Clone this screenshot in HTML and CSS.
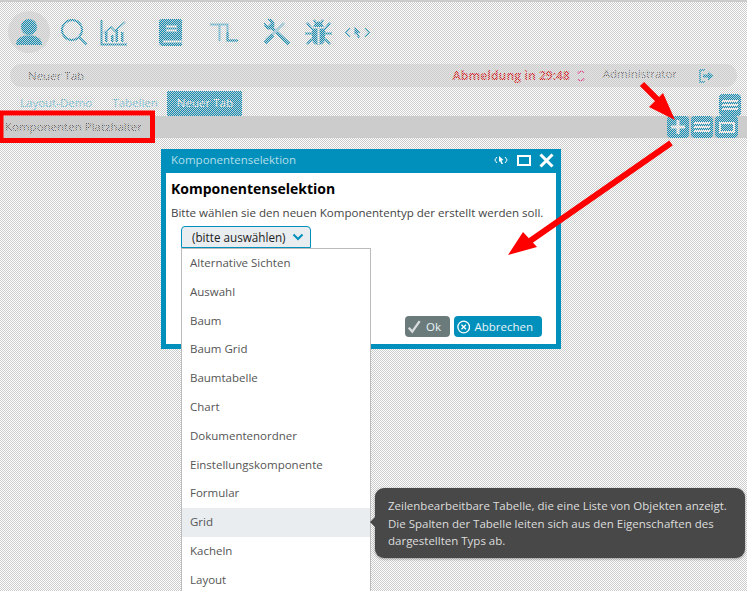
FILE: index.html
```html
<!DOCTYPE html>
<html lang="de">
<head>
<meta charset="utf-8">
<title>Komponentenselektion</title>
<link rel="stylesheet" href="styles.css">
</head>
<body>
<div class="app">
  <header class="nav">
    <div class="nav-user">
      <svg width="28" height="28" viewBox="0 0 28 28"><circle cx="14" cy="9" r="8"/><path d="M1 27c0-6 4-8 9-9.500h8c5 1.500 9 3.500 9 9.500z"/></svg>
    </div>
    <svg class="ic ic-search" width="28" height="28" viewBox="0 0 28 28"><circle cx="12" cy="12" r="10" class="ln"/><path d="M19 19l7.500 7.500" class="ln"/></svg>
    <svg class="ic ic-chart" width="28" height="28" viewBox="0 0 28 28"><path d="M1.500 2v24.500H27" class="ln"/><path d="M5 14h2.500v10H5zM11 17h2.500v7H11zM15.500 12H18v12h-2.500zM21 14h2.500v10H21z"/><path d="M4 15l7-6 4 4 10-9" class="ln thin"/></svg>
    <svg class="ic ic-book" width="24" height="27" viewBox="0 0 24 27"><path d="M3 0h18a2 2 0 0 1 2 2v25H4a4 4 0 0 1-4-4V3a3 3 0 0 1 3-3z"/><path d="M7 7.500h11M7 11.500h11M4 22.500h19" class="cut"/></svg>
    <svg class="ic ic-tl" width="28" height="19" viewBox="0 0 28 19"><path d="M0 1.500h17.500v16H28" class="ln light"/><path d="M9.500 2v16" class="ln light"/><path d="M17.500 9v8.500H28" class="ln"/></svg>
    <svg class="ic ic-tools" width="27" height="27" viewBox="0 0 27 27"><path d="M8 8l18 17" class="ln wide"/><path d="M1 3.500l4 3.500 3-3-3.500-3.500c4-1.500 7 1 7 5 0 2-1 3-2 4l-2 1c-3 1-7-3-6.500-7z"/><path d="M3 21L21 4" class="ln wide2"/><path d="M2 24l8-8" class="ln wide"/></svg>
    <svg class="ic ic-bug" width="27" height="27" viewBox="0 0 27 27"><path d="M8.500 8c0-3 2-5.500 5-5.500s5 2.500 5 5.500z"/><path d="M7 9.500h13v10c0 4-3 6.500-6.500 6.500S7 23.500 7 19.500z"/><path d="M13.500 9.500V27" class="cut"/><path d="M2 4l5 6M25 4l-5 6M0 14.500h7M27 14.500h-7M2 25l5-5M25 25l-5-5M9 1l2 3M18 1l-2 3" class="ln"/></svg>
    <svg class="ic ic-dev" width="25" height="11" viewBox="0 0 25 11"><path d="M5 1.500L1 5.500l4 4M20 1.500l4 4-4 4" class="ln thin"/><path d="M9.500 0l6.500 5.500-3 .5 2 4.500-2 .5-2-4.500-1.500 2z"/></svg>
  </header>

  <div class="session">
    <span class="session-tab">Neuer Tab</span>
    <span class="session-logout">Abmeldung in 29:48</span>
    <svg class="ic-refresh" width="10" height="12" viewBox="0 0 10 12"><path d="M1.500 4A4 4 0 0 1 8 2.500M8.500 8A4 4 0 0 1 2 9.500" fill="none" stroke="#f0308a" stroke-width="1.400"/></svg>
    <span class="session-user">Administrator</span>
    <svg class="ic-exit" width="15" height="14" viewBox="0 0 15 14"><path d="M6 1H1v12h5" class="ln thin"/><path d="M4 5.500h5V2.500L14.500 7 9 11.500v-3H4z"/></svg>
  </div>

  <div class="tabrow">
    <span class="tab">Layout-Demo</span>
    <span class="tab">Tabellen</span>
    <span class="tab tab-active">Neuer Tab</span>
    <span class="tool tool-menu"><svg width="16" height="10" viewBox="0 0 16 10"><path d="M0 1h16M0 5h16M0 9h16"/></svg></span>
  </div>
  <div class="holder">
    <span class="holder-title">Komponenten Platzhalter</span>
    <span class="tool"><svg width="14" height="14" viewBox="0 0 14 14"><path class="plus" d="M7 0v14M0 7h14"/></svg></span>
    <span class="tool"><svg width="16" height="10" viewBox="0 0 16 10"><path d="M0 1h16M0 5h16M0 9h16"/></svg></span>
    <span class="tool tool-last"><svg width="16" height="11" viewBox="0 0 16 11"><path d="M1 1h14v9H1z"/></svg></span>
  </div>
</div>

<svg class="veil" width="747" height="591">
  <defs>
    <pattern id="checker" width="2" height="2" patternUnits="userSpaceOnUse">
      <rect width="1" height="1" fill="#ccc"/>
      <rect x="1" y="1" width="1" height="1" fill="#ccc"/>
    </pattern>
  </defs>
  <rect width="747" height="591" fill="url(#checker)"/>
</svg>

<section class="modal">
  <div class="modal-bar">
    <span class="modal-title">Komponentenselektion</span>
    <svg class="mb-dev" width="14" height="8" viewBox="0 0 14 8"><path d="M3 1L.8 4 3 7M11 1l2.200 3L11 7" fill="none" stroke="#fff"/><path d="M5 0l4.500 4-2 .5L9 8H7.500L6 5 5 6z" fill="#fff"/></svg>
    <svg class="mb-max" width="14" height="11" viewBox="0 0 14 11"><path d="M1 1h12v9H1z" fill="none" stroke="#fff" stroke-width="2"/></svg>
    <svg class="mb-close" width="15" height="15" viewBox="0 0 15 15"><path d="M1.500 1.500l12 12M13.500 1.500l-12 12" stroke="#fff" stroke-width="3"/></svg>
  </div>
  <div class="modal-body">
    <h2>Komponentenselektion</h2>
    <p>Bitte wählen sie den neuen Komponententyp der erstellt werden soll.</p>
    <div class="picker">
      <div class="picker-btn">(bitte auswählen)
        <svg width="12" height="8" viewBox="0 0 12 8"><path d="M1.500 1.500L6 6l4.500-4.500" fill="none" stroke="#0090bb" stroke-width="2"/></svg>
      </div>
      <ul class="picker-list">
        <li>Alternative Sichten</li>
        <li>Auswahl</li>
        <li>Baum</li>
        <li>Baum Grid</li>
        <li>Baumtabelle</li>
        <li>Chart</li>
        <li>Dokumentenordner</li>
        <li>Einstellungskomponente</li>
        <li>Formular</li>
        <li class="is-hover">Grid</li>
        <li>Kacheln</li>
        <li>Layout</li>
      </ul>
    </div>
    <div class="modal-foot">
      <button class="btn btn-ok" type="button"><svg width="18" height="17" viewBox="0 0 18 17"><path d="M1 10l4.500 5L15 1.500" fill="none" stroke="#d8dcdc" stroke-width="3"/></svg>Ok</button>
      <button class="btn btn-cancel" type="button"><svg width="16" height="16" viewBox="0 0 15 15"><circle cx="7.500" cy="7.500" r="6.500" fill="none" stroke="#fff" stroke-width="1.500"/><path d="M5 5l5 5M10 5l-5 5" stroke="#fff" stroke-width="1.500"/></svg>Abbrechen</button>
    </div>
  </div>
</section>

<div class="tip">Zeilenbearbeitbare Tabelle, die eine Liste von Objekten anzeigt. Die Spalten der Tabelle leiten sich aus den Eigenschaften des dargestellten Typs ab.</div>

<svg class="marks" width="747" height="591" viewBox="0 0 747 591">
  <rect x="1" y="113" width="151.500" height="27.500" fill="none" stroke="#f00" stroke-width="5"/>
  <path d="M642 84l25 25M671 143L530 241" stroke="#f00" stroke-width="6" fill="none"/>
  <path d="M675 120l-26-13 14-14zM508 255l15-23 14 15z" fill="#f00"/>
</svg>
</body>
</html>
```
FILE: styles.css
```css
* { box-sizing: border-box; }
html, body { margin: 0; height: 591px; overflow: hidden; }
body { position: relative; background: #fff; font: 11.500px/16px "Open Sans", sans-serif; color: #555; white-space: nowrap; }

.app { height: 591px; }
.nav { display: flex; align-items: center; height: 64px; padding: 1px 0 3px 8px; border-top: 2px solid #ccc; margin-top: 0; }
.nav svg { fill: #0090bb; }
.ln { fill: none; stroke: #0090bb; stroke-width: 2; }
.ln.thin { stroke-width: 1.500; }
.ln.light { stroke: #4cb8dc; }
.ln.wide { stroke-width: 3.500; }
.ln.wide2 { stroke-width: 3; stroke: #8ccfe6; }
.cut { fill: none; stroke: #fff; stroke-width: 2; }
.nav-user { display: flex; align-items: flex-end; justify-content: center; width: 42px; height: 42px; padding-bottom: 7px; border-radius: 50%; background: #e2e2e2; }
.ic { display: block; flex: none; }
.ic-search { margin-left: 10px; }
.ic-chart { margin-left: 12px; }
.ic-book { margin-left: 31px; }
.ic-tl { margin-left: 27px; }
.ic-tools { margin-left: 25px; }
.ic-bug { margin-left: 15px; }
.ic-dev { margin-left: 13px; }

.session { display: flex; align-items: center; height: 23px; margin: 0 10px; padding: 0 23px 0 18px; border-radius: 12px; background: #e4e4e4; }
.session-tab { flex: 1; color: #555; }
.session-logout { font-size: 12px; color: #e02020; font-weight: 700; }
.ic-refresh { margin: 0 0 0 6px; }
.session-user { margin: -3px 0 0 17px; color: #666; }
.ic-exit { margin-left: 22px; fill: #0090bb; }

.tabrow { display: flex; align-items: flex-end; height: 29px; padding: 0 6px 0 10px; }
.tab { display: block; padding: 4px 10px 5px; color: #4cb8dc; }
.tab-active { width: 75px; height: 25px; margin-left: -1px; padding: 4px 10px; color: #fff; background: #0090bb; }
.tool { display: flex; flex: none; align-items: center; justify-content: center; width: 22px; height: 22px; margin-left: 2px; border-radius: 4px; background: #0090bb; }
.tool svg { display: block; fill: none; stroke: #fff; stroke-width: 2; }
.tool svg .plus { stroke-width: 3; }
.tool-menu { margin-left: auto; }
.tool-last { width: 23px; }
.holder { display: flex; align-items: center; height: 22px; padding: 0 9px 0 5px; background: #ccc; }
.holder-title { flex: 1; color: #555; }

.veil { position: absolute; left: 0; top: 0; display: block; shape-rendering: crispEdges; }

.modal { position: absolute; left: 161px; top: 149px; width: 400px; height: 200px; border: 5px solid #0090bb; border-top: 0; background: #fff; }
.modal-bar { display: flex; align-items: center; height: 24px; margin: 0 -1px; padding: 0 3px 2px 6px; background: #0090bb; }
.modal-title { flex: 1; color: #b5deeb; }
.mb-dev { margin-right: 9px; }
.mb-max { margin-right: 8px; }
.modal-body { padding: 6px 5px 0; }
.modal-body h2 { margin: 0; font-size: 14px; line-height: 19px; font-weight: 700; color: #000; }
.modal-body p { margin: 6px 0 0; font-size: 11.560px; line-height: 17px; color: #444; }
.picker { position: relative; width: 130px; margin: 5px 0 0 10px; }
.picker-btn { display: flex; align-items: center; justify-content: space-between; height: 22px; padding: 0 6px 0 10px; border: 1px solid #0090bb; border-radius: 4px 4px 0 0; background: #e9edf0; color: #222; font-size: 11.700px; }
.picker-list { position: absolute; left: 0; top: 22px; width: 190px; margin: 0; padding: 0; list-style: none; background: #fff; border: 1px solid #bbb; }
.picker-list li { height: 28.800px; padding: 0 8px; line-height: 28.800px; color: #555; }
.picker-list li.is-hover { background: #e9edf0; }
.modal-foot { display: flex; justify-content: flex-end; gap: 4px; height: 21px; margin: 68px 9px 0 0; }
.btn { display: flex; align-items: center; height: 21px; padding: 0 9px 0 3px; border: 0; border-radius: 4px; font: 11.500px/16px "Open Sans", sans-serif; color: #e8f4f8; }
.btn svg { margin-right: 4px; }
.btn-ok { width: 45px; background: #6b7b7b; }
.btn-cancel { width: 88px; background: #0090bb; }

.tip { position: absolute; left: 375px; top: 488px; width: 370px; height: 70px; padding: 9px 8px 0 13px; border-radius: 9px; background: #484848; color: #ddd; line-height: 17.500px; white-space: normal; box-shadow: 0 1px 3px rgba(0,0,0,.35); }
.tip::before { content: ""; position: absolute; left: -5px; top: 29px; border: 5px solid transparent; border-left: 0; border-right-color: #484848; }

.marks { position: absolute; left: 0; top: 0; }
```
